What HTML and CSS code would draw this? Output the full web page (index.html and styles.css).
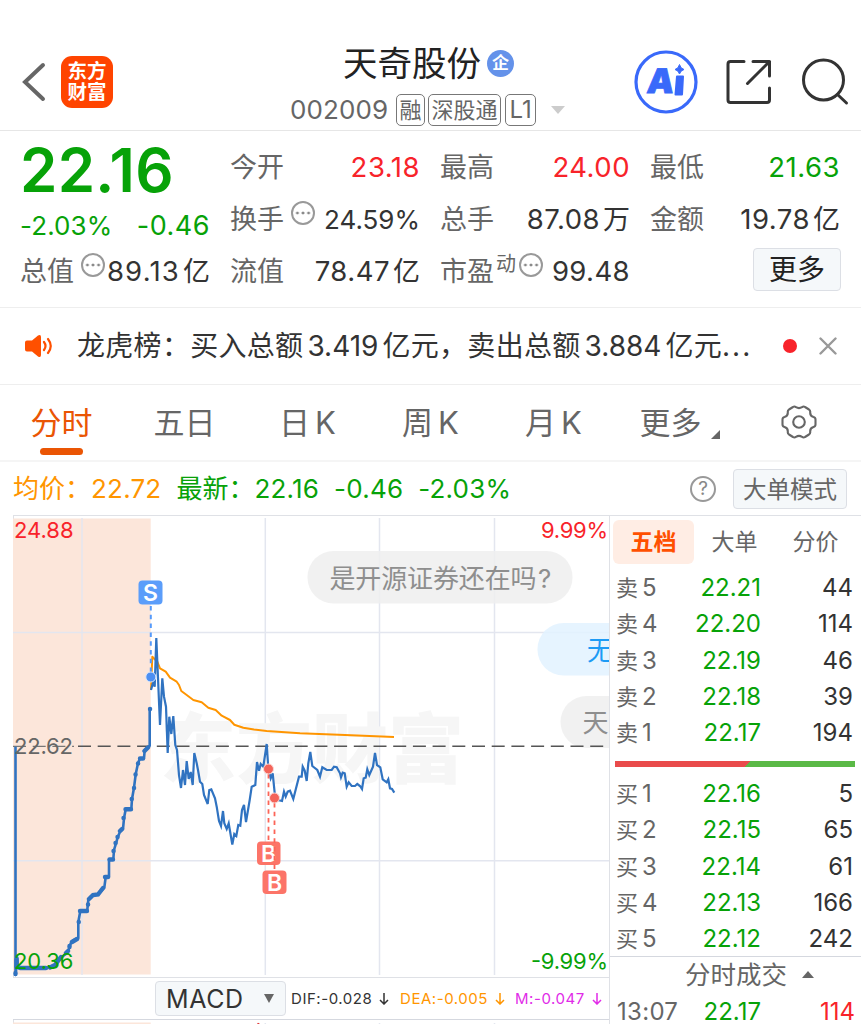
FILE: index.html
```html
<!DOCTYPE html>
<html lang="zh-CN">
<head>
    <meta charset="UTF-8">
    <meta name="viewport" content="width=device-width, initial-scale=1.0">
    <title>天奇股份 002009</title>
    <link rel="stylesheet" href="styles.css">
</head>
<body>
    <header class="topbar">
        <div class="topbar-left">
            <svg class="back" width="26" height="42" viewBox="0 0 26 42"><path d="M22 4 L4 21 L22 38" fill="none" stroke="#666" stroke-width="4" stroke-linecap="round"/></svg>
            <div class="logo"><span>东方</span><span>财富</span></div>
        </div>
        <div class="topbar-title">
            <h1>天奇股份 <span class="corp">企</span></h1>
            <div class="code-row">
                <span class="code">002009</span>
                <span class="tag">融</span>
                <span class="tag">深股通</span>
                <span class="tag tag-l1">L1</span>
                <svg class="caret" width="14" height="8" viewBox="0 0 14 8"><path d="M0 0H14L7 8Z" fill="#ccc"/></svg>
            </div>
        </div>
        <div class="topbar-right">
            <svg width="64" height="64" viewBox="0 0 64 64">
                <circle cx="32" cy="32" r="30" fill="none" stroke="#3969fa" stroke-width="3.2"/>
                <text class="ai-a" x="11.500" y="43.500" transform="translate(5 0) skewX(-6)">A</text>
                <path d="M43 26.500H49L48 44.500H41.500Z" fill="#3969fa" stroke="#3969fa" stroke-width="2" stroke-linejoin="round"/>
                <path d="M45.500 14.500Q46.500 18.500 50 19.500Q46.500 20.500 45.500 24Q44.500 20.500 41 19.500Q44.500 18.500 45.500 14.500Z" fill="#3969fa" stroke="#3969fa" stroke-width="1"/>
            </svg>
            <svg width="46" height="46" viewBox="0 0 46 46" fill="none" stroke="#333" stroke-width="3" stroke-linecap="round" stroke-linejoin="round">
                <path d="M18 2.500H4.500Q2 2.500 2 5V41Q2 43.500 4.500 43.500H41Q43.500 43.500 43.500 41V29"/>
                <path d="M27 2.500H43.500V17M43.500 2.500L21.500 24.500"/>
            </svg>
            <svg width="48" height="48" viewBox="0 0 48 48" fill="none" stroke="#333" stroke-width="3" stroke-linecap="round">
                <circle cx="22.500" cy="22" r="20"/>
                <path d="M36.500 36.500L45.500 45"/>
            </svg>
        </div>
    </header>

    <section class="quote">
        <div class="price">22.16</div>
        <div class="cell"><label>今开</label><b class="up">23.18</b></div>
        <div class="cell"><label>最高</label><b class="up">24.00</b></div>
        <div class="cell"><label>最低</label><b class="down">21.63</b></div>

        <div class="cell change"><b class="down">-2.03%</b><b class="down">-0.46</b></div>
        <div class="cell"><label>换手</label><i class="dots"></i><b class="rate">24.59%</b></div>
        <div class="cell"><label>总手</label><b>87.08<span>万</span></b></div>
        <div class="cell"><label>金额</label><b>19.78<span>亿</span></b></div>

        <div class="cell"><label>总值</label><i class="dots"></i><b class="cap">89.13<span>亿</span></b></div>
        <div class="cell"><label>流值</label><b>78.47<span>亿</span></b></div>
        <div class="cell"><label>市盈<sup>动</sup></label><i class="dots dots-pe"></i><b class="pe">99.48</b></div>
        <div class="cell cell-more"><button class="more">更多</button></div>
    </section>

    <section class="notice">
        <svg width="30" height="24" viewBox="0 0 30 24">
            <path d="M3 6.500H8L14 1.500Q17 0 17 3V21Q17 24 14 22.500L8 17.500H3Q1 17.500 1 15.500V8.500Q1 6.500 3 6.500Z" fill="#ff5000"/>
            <path d="M20 8Q23 12 20 16M24 5Q29.500 12 24 19" fill="none" stroke="#ff5000" stroke-width="2.2" stroke-linecap="round"/>
        </svg>
        <p>龙虎榜：买入总额<span>3.419</span>亿元，卖出总额<span>3.884</span>亿元<em>...</em></p>
        <i class="red-dot"></i>
        <svg width="18" height="18" viewBox="0 0 18 18"><path d="M1.500 1.500L16.500 16.500M16.500 1.500L1.500 16.500" stroke="#999" stroke-width="2.4" stroke-linecap="round"/></svg>
    </section>

    <nav class="tabs">
        <a class="active">分时</a>
        <a>五日</a>
        <a>日<span>K</span></a>
        <a>周<span>K</span></a>
        <a>月<span>K</span></a>
        <a class="tab-more">更多<svg width="9" height="9" viewBox="0 0 9 9"><path d="M9 0V9H0Z" fill="#666"/></svg></a>
        <a class="tab-settings">
            <svg width="36" height="34" viewBox="0 0 36 34" fill="none" stroke="#666" stroke-width="2.1" stroke-linejoin="round">
                <path d="M12 2Q13.500 1 15 2.200Q18 4 21 2.200Q22.500 1 24 2L28 4.500Q29.500 5.500 29.200 7.500Q29 11 32.500 12Q34.500 12.500 34.500 14.500V19.500Q34.500 21.500 32.500 22Q29 23 29.200 26.500Q29.500 28.500 28 29.500L24 32Q22.500 33 21 31.800Q18 30 15 31.800Q13.500 33 12 32L8 29.500Q6.500 28.500 6.800 26.500Q7 23 3.500 22Q1.500 21.500 1.500 19.500V14.500Q1.500 12.500 3.500 12Q7 11 6.800 7.500Q6.500 5.500 8 4.500Z"/>
                <circle cx="18" cy="17" r="5.800"/>
            </svg>
        </a>
    </nav>

    <section class="summary">
        <span class="avg">均价：</span><span class="avg num">22.72</span>
        <span class="down last">最新：</span><span class="down num">22.16</span>
        <span class="down num">-0.46</span><span class="down num">-2.03%</span>
        <span class="help">?</span>
        <button class="mode">大单模式</button>
    </section>

    <main class="board">
        <div class="chart-col">
            <svg class="chart" width="596" height="461" viewBox="13 516 596 461">
                <rect x="13" y="518.500" width="137.700" height="456" fill="#fce6da"/>
                <g stroke="#e3e6ef" stroke-width="1.500">
                    <path d="M82 518V975M265.300 518V975M379.500 518V975M494.500 518V975"/>
                    <path d="M13 632.500H609M13 860.700H609"/>
                </g>
                <text class="watermark" x="160" y="777" textLength="304">东方财富</text>

                <!-- floating comments -->
                <rect x="307.500" y="551" width="265" height="52.500" rx="26" fill="#eee" fill-opacity="0.85"/>
                <text class="bubble" x="329.500" y="587.500" textLength="207">是开源证券还在吗</text>
                <text class="bubble" x="538" y="587.500">?</text>
                <rect x="537.500" y="623" width="120" height="52.500" rx="26" fill="#e2f2ff" fill-opacity="0.85"/>
                <text class="bubble bubble-own" x="587" y="660">无</text>
                <rect x="560.500" y="696" width="120" height="52" rx="26" fill="#eee" fill-opacity="0.85"/>
                <text class="bubble" x="582.500" y="732">天</text>

                <path d="M78 746.300H609" stroke="#555" stroke-width="1.400" stroke-dasharray="13 6.700"/>
                <path d="M13 746.300H74" stroke="#777" stroke-width="1.200" stroke-dasharray="13 6.700"/>

                <!-- average price -->
                <path fill="none" stroke="#ff9500" stroke-width="2" stroke-linejoin="round" d="M151 690L152.300 656.700 157.300 661.700 160 668.300 165.700 671.700 170 677.700 176.700 681.700 179 685 181.300 691 186.700 695 193.300 700 201.700 702.300 208.300 707.700 215.700 710 221.700 715.700 230 720 234.300 724.700 243.300 727.700 254 729.500 266.700 731 300 733.300 345 735 394 737"/>

                <!-- call auction -->
                <path fill="none" stroke="#3073c1" stroke-width="2.600" stroke-linejoin="round" d="M15.500 746.700V975L17.500 958V968H46.700L55 965 61.700 957 67.700 952.500 70.700 943.500 73 940.500 78.300 938V922L80.300 911 87.300 910 88.300 900 93.300 895 98.300 894.300 104.300 887.700 105.700 877H109V859.500H113.300L114 850 116 843.300 117.700 837.300 120 831.700 123 829 124 818.300 125.700 809.300H131.300L132 799 134 787.700 135.700 774.300 138 763.300 140 758.300H144L144.700 750 149.700 745.700V709"/>
                <path fill="none" stroke="#3073c1" stroke-width="4.400" stroke-linecap="round" d="M16.500 960V967M15.500 973V974M20 968H46M50 967.500L55 965 61 957M66 953L68 951M69.500 947V946M72 942L77 939M78.700 922h.1M80 911H87M88 904.500h.1M89 899L93 895 98 894.500 103 888M105 877H108M109.500 859.500H113M113.500 851h.1M115.500 843h.1M117.500 837h.1M120 831L122 829M123.500 818h.1M125.500 809.300H131M131.700 799h.1M134 788h.1M135.500 774.500h.1M138 763.500h.1M140 758.500H143M144.500 751L148 747.500M150 709h.1"/>

                <!-- intraday price -->
                <path fill="none" stroke="#3073c1" stroke-width="2.200" stroke-linejoin="miter" d="M151 690L153.300 681.700 154.700 686.700 156.300 638 160 725 162.300 678.300 164 696.700 166 706.700 167.700 753 169.300 716.700 171.300 734 173.300 716 175.300 745 177 750 179 775 181 788 183 770 185 785 186.700 761 188.700 779 190.700 772 192.700 785 194.300 753 196.700 763.300 198 770 200 781.700 202.300 784 204 795 207.700 804 209.300 790 211.300 789.300 215 798.300 216.700 806.700 219 821 221 826 223 811 224.300 823.300 226.700 829 228.700 823.300 232.300 844.500 234.300 834 236.300 836 238.300 825 240.300 825.700 242 810 244 805 246 822 249.700 800 251.700 786.700 255.300 785 257 762 259 770.700 260.700 764 263.300 766.700 266.700 744 268.300 768 270.700 778.300 272.700 773.300 275 796 278 800 282 801 284 791.700 285.700 796.700 287.700 791.700 290 790.700 293.300 799 299 776.700 301.700 776.700 302.700 766.700 304.700 770.700 306.700 781 308.300 763.300 310.300 752 312.300 766 317.300 770 320 776.700 322.300 767.300 326.700 770 331.700 770 334 766.700 336.700 767.300 340 773.300 341 777.300 342.700 772.700 344.700 773.300 346.700 786.700 348.700 782.300 351.700 786 355 786 357.300 784 360 786 362 789 363.700 778.300 365.700 777.700 367.300 769.300 369.300 775 373 766.700 375 753 377 765 380.300 767.300 382.700 779.300 386.700 782.300 388.300 779.300 390 788.300 392 789 394.300 792.700"/>

                <!-- trade marks -->
                <path d="M150.800 606V672" stroke="#559afa" stroke-width="2" stroke-dasharray="4.500 4.300"/>
                <circle cx="150.800" cy="677" r="5" fill="#4c8ff2" stroke="#d8e7fd"/>
                <rect x="138.500" y="580.500" width="24" height="24" rx="4" fill="#5b9dfa"/>
                <text class="mark" x="150.500" y="601">S</text>

                <rect x="257" y="841.500" width="23.500" height="23.500" rx="4" fill="#fc7468"/>
                <text class="mark" x="268.700" y="861.500">B</text>
                <rect x="262.500" y="870.500" width="24" height="23.500" rx="4" fill="#fc7468"/>
                <text class="mark" x="274.500" y="890.500">B</text>
                <path d="M268.500 774V841M274.500 803V870" stroke="#fc6457" stroke-width="1.800" stroke-dasharray="4.500 4.300"/>
                <circle cx="268.500" cy="769" r="5" fill="#f4645a" stroke="#fbd8d5"/>
                <circle cx="274.500" cy="798" r="5" fill="#f4645a" stroke="#fbd8d5"/>

                <text class="axis axis-up" x="14" y="537.500" textLength="59.500">24.88</text>
                <text class="axis axis-mid" x="14" y="753.500" textLength="59">22.62</text>
                <text class="axis axis-down" x="14" y="969" textLength="59.500">20.36</text>
                <text class="axis axis-up" x="541" y="537.500" textLength="67">9.99%</text>
                <text class="axis axis-down" x="531" y="969" textLength="77">-9.99%</text>
            </svg>
            <div class="macd">
                <button class="indicator">MACD <svg width="10" height="9" viewBox="0 0 10 9"><path d="M0 0H10L5 9Z" fill="#666"/></svg></button>
                <span class="dif">DIF:-0.028 <svg class="arrow" width="10" height="12" viewBox="0 0 10 12"><path d="M5 0V11M1 7L5 11L9 7"/></svg></span>
                <span class="dea">DEA:-0.005 <svg class="arrow" width="10" height="12" viewBox="0 0 10 12"><path d="M5 0V11M1 7L5 11L9 7"/></svg></span>
                <span class="m">M:-0.047 <svg class="arrow" width="10" height="12" viewBox="0 0 10 12"><path d="M5 0V11M1 7L5 11L9 7"/></svg></span>
            </div>
            <svg class="subchart" width="596" height="4" viewBox="13 1020 596 4">
                <rect x="13" y="1022.500" width="137.700" height="2" fill="#fce6da"/>
                <path d="M265.300 1023V1024M379.500 1023V1024M494.500 1023V1024" stroke="#e3e6ef" stroke-width="1.500"/>
                <path d="M257 1024L258 1022.800 260 1024Z" fill="#d22"/>
            </svg>
        </div>

        <aside class="depth">
            <div class="depth-tabs"><a class="active">五档</a><a>大单</a><a>分价</a></div>
            <ul class="orders">
                <li><label>卖<span>5</span></label><b>22.21</b><em>44</em></li>
                <li><label>卖<span>4</span></label><b>22.20</b><em>114</em></li>
                <li><label>卖<span>3</span></label><b>22.19</b><em>46</em></li>
                <li><label>卖<span>2</span></label><b>22.18</b><em>39</em></li>
                <li><label>卖<span>1</span></label><b>22.17</b><em>194</em></li>
            </ul>
            <div class="ratio"></div>
            <ul class="orders">
                <li><label>买<span>1</span></label><b>22.16</b><em>5</em></li>
                <li><label>买<span>2</span></label><b>22.15</b><em>65</em></li>
                <li><label>买<span>3</span></label><b>22.14</b><em>61</em></li>
                <li><label>买<span>4</span></label><b>22.13</b><em>166</em></li>
                <li><label>买<span>5</span></label><b>22.12</b><em>242</em></li>
            </ul>
            <div class="deals-title">分时成交 <svg width="12" height="7" viewBox="0 0 12 7"><path d="M0 7H12L6 0Z" fill="#666"/></svg></div>
            <ul class="orders deals">
                <li><label>13:07</label><b>22.17</b><em class="up">114</em></li>
            </ul>
        </aside>
    </main>
</body>
</html>
```
FILE: styles.css
```css
* {
    box-sizing: border-box;
}
body {
    margin: 0;
    width: 861px;
    height: 1024px;
    overflow: hidden;
    background: #fff;
    color: #333;
    font-family: Inter, "Noto Sans CJK SC", sans-serif;
    font-size: 27px;
    line-height: 1.2;
}
h1, p, ul {
    margin: 0;
    padding: 0;
    font-weight: 400;
}
ul {
    list-style: none;
}
b, i, em {
    font-weight: 400;
    font-style: normal;
}
svg {
    display: block;
    flex: none;
}
button {
    font-family: inherit;
    padding: 0;
    background: #f5f8fa;
    border: 1px solid #dcdfe5;
    border-radius: 4px;
}
.up {
    color: #f8232a !important;
}
.down {
    color: #07a208 !important;
}

/* header */
.topbar {
    display: grid;
    grid-template-columns: 290px 1fr 227px;
    height: 131px;
    padding-top: 32px;
    border-bottom: 1px solid #e6e6e6;
}
.topbar-left {
    display: flex;
    align-items: center;
    padding: 0 0 0 21px;
    gap: 14px;
    height: 99px;
}
.logo {
    display: flex;
    flex-direction: column;
    align-items: center;
    justify-content: center;
    width: 52px;
    height: 52px;
    border-radius: 11px;
    background: #ff4400;
    color: #fff;
    font-size: 19.5px;
    font-weight: 700;
    line-height: 21px;
}
.topbar-title {
    display: flex;
    flex-direction: column;
}
.topbar-title h1 {
    display: flex;
    align-items: center;
    height: 62px;
    padding: 2px 0 0 53px;
    font-size: 34.5px;
    color: #222;
}
.corp {
    width: 27px;
    height: 27px;
    margin: 0 0 1px 6px;
    border-radius: 50%;
    background: #6492ea;
    color: #fff;
    font-size: 17px;
    font-weight: 700;
    line-height: 27px;
    text-align: center;
}
.code-row {
    display: flex;
    align-items: center;
    height: 31px;
    gap: 3px;
    color: #666;
}
.code {
    width: 103px;
    font-size: 26px;
    letter-spacing: 0.1px;
}
.tag {
    height: 32px;
    padding: 0 2.5px;
    border: 1.5px solid #777;
    border-radius: 5px;
    font-size: 22px;
    line-height: 30px;
}
.tag-l1 {
    font-size: 24px;
    padding: 0 3.5px;
    margin-left: 1px;
    letter-spacing: -0.1px;
}
.caret {
    margin-left: 12px;
}
.topbar-right {
    display: flex;
    align-items: center;
    height: 99px;
}
.topbar-right svg:nth-child(2) {
    margin-left: 28px;
}
.topbar-right svg:nth-child(3) {
    margin-left: 29px;
}
.ai-a {
    font-size: 34px;
    font-weight: 900;
    fill: #3969fa;
    stroke: #3969fa;
    stroke-width: 0.8;
}

/* quote numbers */
.quote {
    display: grid;
    grid-template-columns: repeat(4, 189px);
    grid-template-rows: repeat(3, 52px);
    column-gap: 21px;
    height: 177px;
    padding: 10px 21px 0;
    border-bottom: 1px solid #eee;
}
.price {
    color: #07a208;
    font-size: 60px;
    font-weight: 600;
    line-height: 58px;
    letter-spacing: 0.3px;
    margin-left: -1px;
}
.cell {
    display: flex;
    align-items: center;
    white-space: nowrap;
}
.cell label {
    color: #666;
    padding-top: 2px;
    margin-left: -1px;
}
.cell b {
    margin-left: auto;
    font-size: 27.5px;
    letter-spacing: 0.5px;
}
.cell b:has(span),
.cell .rate {
    padding-top: 2px;
}
.cell b span {
    margin-left: 3px;
    font-size: 27px;
    letter-spacing: 0;
}
.cell .rate {
    font-size: 26px;
    letter-spacing: 0;
}
.cell .cap {
    letter-spacing: 1.2px;
}
.cell .pe {
    letter-spacing: 0.4px;
}
.cell sup {
    font-size: 20px;
    line-height: 0;
    vertical-align: 10px;
    margin-left: 2px;
}
.change {
    padding-top: 14px;
}
.cell.change b:first-child {
    margin-left: -1px;
    font-size: 26px;
    letter-spacing: 0.1px;
}
.cell.change b:last-child {
    font-size: 27px;
}
.dots {
    position: relative;
    top: -6px;
    width: 24px;
    height: 24px;
    margin-left: 7px;
    flex: none;
    border: 2px solid #999;
    border-radius: 50%;
    background: radial-gradient(circle, #888 1.2px, transparent 1.7px) center / 5.6px 20px repeat-x;
    background-clip: content-box;
    padding: 0 2px;
}
.dots-pe {
    margin-left: 3px;
}
.cell-more {
    justify-content: flex-end;
}
.more {
    width: 88px;
    height: 43px;
    margin: 0 -1px 4px 0;
    color: #222;
    font-size: 28px;
    line-height: 43px;
}

/* notice */
.notice {
    display: flex;
    align-items: center;
    height: 77px;
    padding: 0 24px;
    border-bottom: 1px solid #eee;
}
.notice p {
    width: 680px;
    margin-left: 23px;
    padding-top: 2px;
    white-space: nowrap;
    font-size: 28px;
    letter-spacing: 0.3px;
}
.notice p span {
    margin: 0 4px;
    letter-spacing: 0;
}
.notice em {
    letter-spacing: 2px;
}
.red-dot {
    width: 14px;
    height: 14px;
    margin: 0 22px 0 auto;
    flex: none;
    border-radius: 50%;
    background: #f8232a;
}

/* period tabs */
.tabs {
    display: grid;
    grid-template-columns: repeat(7, 1fr);
    height: 77px;
    border-bottom: 2px solid #f5f5f5;
    color: #666;
    font-size: 31px;
}
.tabs a {
    display: flex;
    align-items: center;
    justify-content: center;
    position: relative;
    padding-top: 1px;
}
.tabs a span {
    margin-left: 5px;
}
.tabs .active {
    color: #ea5504;
}
.tabs .active::after {
    content: "";
    position: absolute;
    bottom: 5px;
    width: 43px;
    height: 7px;
    border-radius: 4px;
    background: #ea5504;
}
.tabs .tab-more {
    padding-left: 6px;
}
.tab-more svg {
    margin: 22px 0 0 9px;
}
.tabs .tab-settings {
    padding: 0 2px 2px 0;
}

/* summary line */
.summary {
    display: flex;
    align-items: center;
    height: 53px;
    padding: 0 14px 0 13px;
    font-size: 26px;
}
.summary .num {
    margin-right: 15px;
    letter-spacing: 0.2px;
}
.avg {
    color: #ff9500;
}
.help {
    width: 26px;
    height: 26px;
    margin-left: auto;
    border: 2px solid #999;
    border-radius: 50%;
    color: #888;
    font-size: 19px;
    line-height: 22px;
    text-align: center;
}
.mode {
    width: 114px;
    height: 40px;
    margin-left: 17px;
    color: #666;
    font-size: 23.5px;
    line-height: 39px;
}

/* chart */
.board {
    display: grid;
    grid-template-columns: 596px 1fr;
    margin-left: 13px;
    height: 509px;
}
.chart-col {
    border-top: 1px solid #dfe1e6;
    border-left: 1px solid #dfe1e6;
}
.chart {
    margin-left: -1px;
}
.watermark {
    font-size: 76px;
    font-weight: 900;
    fill: #f6f6f6;
}
.bubble {
    font-size: 26px;
    fill: #8e8e8e;
}
.bubble-own {
    fill: #1d9bf5;
}
.mark {
    font-size: 23px;
    font-weight: 600;
    fill: #fff;
    text-anchor: middle;
}
.axis {
    font-size: 22px;
}
.axis-up {
    fill: #f8232a;
}
.axis-mid {
    fill: #666;
}
.axis-down {
    fill: #07a208;
}
.macd {
    display: flex;
    align-items: center;
    height: 43px;
    margin-left: -1px;
    padding-left: 142px;
    border-top: 1px solid #dfe1e6;
    border-bottom: 1px solid #d5d8df;
    background: #fff;
    font-size: 15px;
    letter-spacing: 0.55px;
    white-space: nowrap;
}
.indicator {
    display: flex;
    align-items: center;
    justify-content: space-between;
    width: 131px;
    height: 35px;
    margin-right: 5px;
    padding: 0 11px 0 10px;
    color: #333;
    font-size: 25px;
    letter-spacing: 0.6px;
}
.macd span {
    display: flex;
    align-items: center;
    justify-content: space-between;
}
.dif {
    width: 98px;
}
.dea {
    width: 105px;
    margin-left: 11px;
    color: #ff9500;
}
.m {
    width: 87px;
    margin-left: 10px;
    color: #e12be8;
}
.arrow {
    fill: none;
    stroke: currentColor;
    stroke-width: 1.5;
}
.subchart {
    margin-left: -1px;
}

/* order book */
.depth {
    border-left: 1px solid #dfe1e6;
    font-size: 23px;
    color: #666;
}
.depth-tabs {
    display: flex;
    height: 54px;
    padding: 4px 0 5px 3px;
    border-top: 1px solid #dfe1e6;
}
.depth-tabs a {
    width: 81px;
    height: 44px;
    line-height: 45px;
    text-align: center;
}
.depth-tabs .active {
    border-radius: 6px;
    background: #ffede4;
    color: #ff5000;
    font-weight: 600;
}
.orders li {
    display: grid;
    grid-template-columns: 62px 83px 1fr;
    align-items: center;
    height: 36.4px;
    padding: 2px 8px 0 6px;
}
.orders label {
    font-size: 22px;
}
.orders label span {
    margin-left: 4px;
    font-size: 24px;
}
.orders b {
    color: #07a208;
    font-size: 24px;
    text-align: right;
}
.orders em {
    color: #333;
    font-size: 24px;
    text-align: right;
}
.ratio {
    width: 240px;
    height: 6px;
    margin: 10px 0 8px 5px;
    background: linear-gradient(135deg, #e94b4b 55%, #5ab946 55%);
}
.deals-title {
    display: flex;
    align-items: center;
    justify-content: center;
    gap: 15px;
    height: 37px;
    margin-top: -1px;
    padding-left: 28px;
    border-top: 1px solid #d5d8df;
    font-size: 25.5px;
}
.orders.deals label {
    font-size: 24px;
    padding-left: 1px;
    letter-spacing: 0.3px;
}
.orders.deals li {
    padding-right: 6px;
}
```
